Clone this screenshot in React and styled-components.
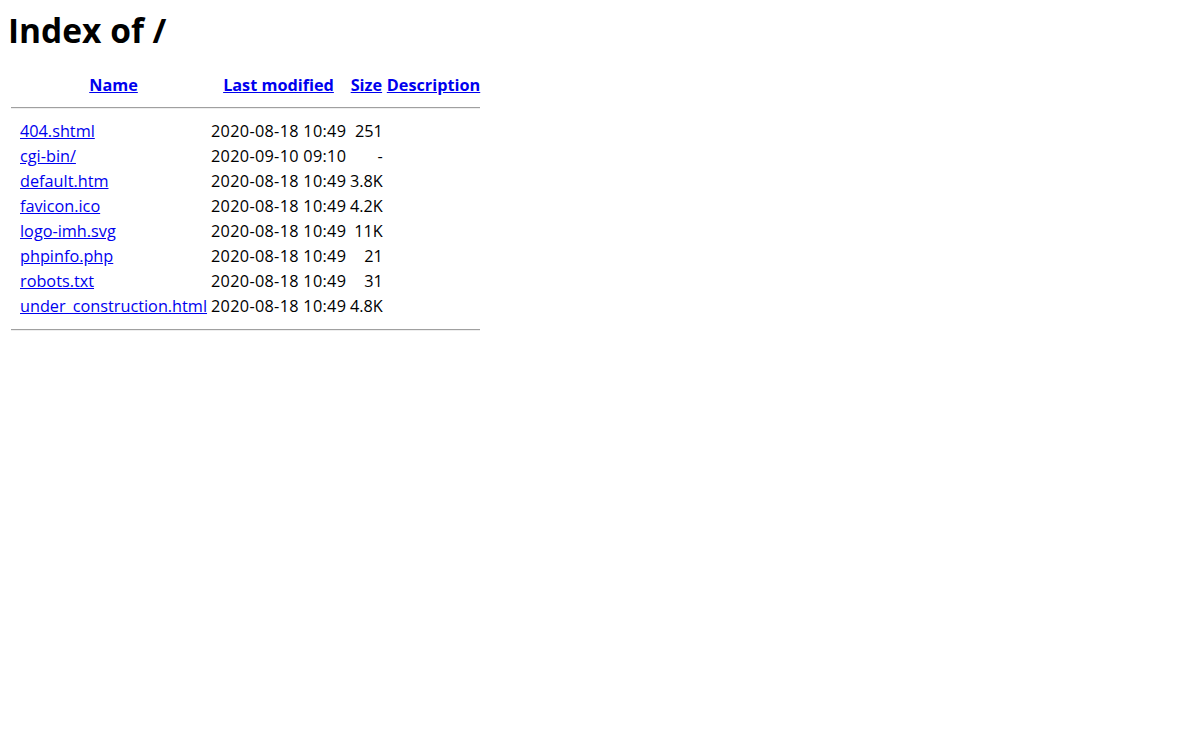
import React from "react";
import styled, { createGlobalStyle } from "styled-components";

const Global = createGlobalStyle`
  html, body { background: #fff; }
  body {
    margin: 8px;
    font-family: "Open Sans", "Noto Sans", "Liberation Sans", sans-serif;
    font-size: 16.25px;
    color: #000;
  }
`;

const Title = styled.h1`
  margin: 0 0 20px;
  font-size: 33.5px;
  line-height: 44px;
  font-weight: 700;
`;

const Table = styled.table`
  border-collapse: separate;
  border-spacing: 2px;
  font-size: 16.25px;
  line-height: 21px;
`;

const Head = styled.th`
  padding: 1px;
  font-weight: 700;
  text-align: center;
  vertical-align: top;
  white-space: nowrap;
`;

const IconCell = styled.td`
  padding: 1px;
  width: 5px;
`;

const IconHead = styled.th`
  padding: 1px;
  width: 5px;
`;

const Cell = styled.td`
  padding: 1px;
  white-space: nowrap;
  text-align: ${(p) => (p.$right ? "right" : "left")};
`;

const DateText = styled.span`
  letter-spacing: 0.3px;
  margin-right: -0.3px;
`;

const Link = styled.a`
  color: #0000ee;
  text-decoration: underline;
`;

const RuleCell = styled.th`
  padding: 1px;
`;

const Rule = styled.hr`
  margin: ${(p) => (p.$top ? "7px 0 8px" : "8px 0 8px")};
  height: 0;
  border: 0;
  border-top: 1px solid #a0a0a0;
  border-bottom: 1px solid #eeeeee;
`;

const files = [
  ["404.shtml", "2020-08-18 10:49", "251"],
  ["cgi-bin/", "2020-09-10 09:10", "-"],
  ["default.htm", "2020-08-18 10:49", "3.8K"],
  ["favicon.ico", "2020-08-18 10:49", "4.2K"],
  ["logo-imh.svg", "2020-08-18 10:49", "11K"],
  ["phpinfo.php", "2020-08-18 10:49", "21"],
  ["robots.txt", "2020-08-18 10:49", "31"],
  ["under_construction.html", "2020-08-18 10:49", "4.8K"],
];

export default function App() {
  return (
    <>
      <Global />
      <Title>Index of /</Title>
      <Table>
        <tbody>
          <tr>
            <IconHead />
            <Head><Link href="#">Name</Link></Head>
            <Head><Link href="#">Last modified</Link></Head>
            <Head><Link href="#">Size</Link></Head>
            <Head><Link href="#">Description</Link></Head>
          </tr>
          <tr>
            <RuleCell colSpan={5}><Rule $top /></RuleCell>
          </tr>
          {files.map(([name, date, size]) => (
            <tr key={name}>
              <IconCell />
              <Cell><Link href="#">{name}</Link></Cell>
              <Cell $right><DateText>{date}</DateText></Cell>
              <Cell $right>{size}</Cell>
              <Cell>&nbsp;</Cell>
            </tr>
          ))}
          <tr>
            <RuleCell colSpan={5}><Rule /></RuleCell>
          </tr>
        </tbody>
      </Table>
    </>
  );
}
